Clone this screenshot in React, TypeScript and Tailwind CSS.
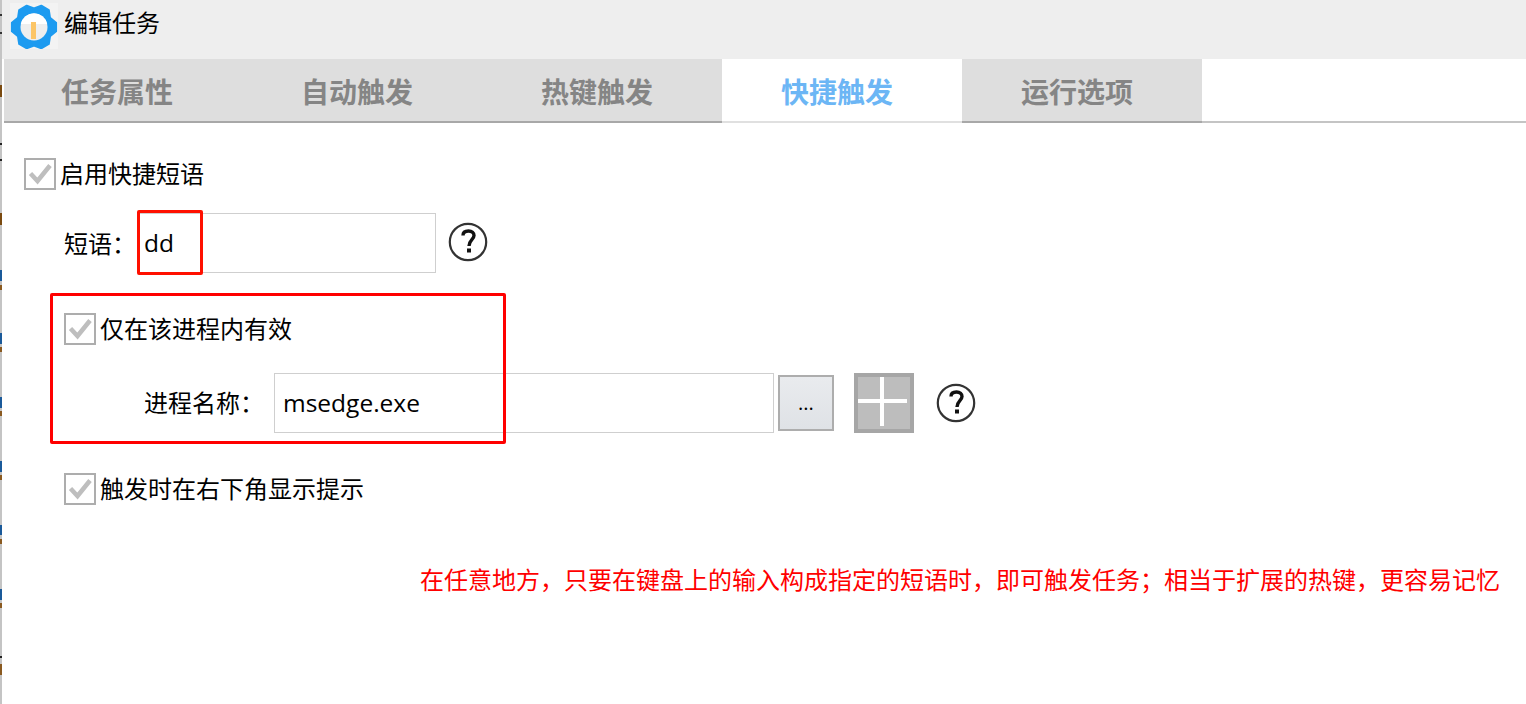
const cjk = "font-['Segoe_UI','Open_Sans','Noto_Sans_CJK_SC',sans-serif]";

const gearPath = (() => {
  const cx = 24;
  const cy = 24;
  const parts: string[] = [];
  for (let i = 0; i < 6; i++) {
    const t = (i * 60 * Math.PI) / 180;
    const pts: [number, number][] = [
      [t - (30 * Math.PI) / 180, 18.5],
      [t - (11 * Math.PI) / 180, 22.5],
      [t + (11 * Math.PI) / 180, 22.5],
    ];
    for (const [a, r] of pts) {
      parts.push(`${(cx + r * Math.cos(a)).toFixed(1)} ${(cy + r * Math.sin(a)).toFixed(1)}`);
    }
  }
  return "M" + parts.join(" L") + " Z";
})();

const edgeMarks: { top: number; h: number; color: string }[] = [
  { top: 14, h: 2, color: "#333333" },
  { top: 32, h: 2, color: "#333333" },
  { top: 85, h: 12, color: "#7a4a10" },
  { top: 143, h: 2, color: "#222222" },
  { top: 159, h: 2, color: "#222222" },
  { top: 213, h: 12, color: "#7a4a10" },
  { top: 270, h: 11, color: "#1a5a9a" },
  { top: 285, h: 5, color: "#8a5a20" },
  { top: 333, h: 11, color: "#1a5a9a" },
  { top: 347, h: 5, color: "#8a5a20" },
  { top: 397, h: 11, color: "#1a5a9a" },
  { top: 411, h: 5, color: "#8a5a20" },
  { top: 461, h: 11, color: "#1a5a9a" },
  { top: 475, h: 5, color: "#8a5a20" },
  { top: 525, h: 10, color: "#1a5a9a" },
  { top: 539, h: 5, color: "#8a5a20" },
  { top: 589, h: 11, color: "#1a5a9a" },
  { top: 603, h: 5, color: "#8a5a20" },
  { top: 656, h: 2, color: "#222222" },
  { top: 664, h: 11, color: "#8a5a20" },
];

function Check({ label }: { label: string }) {
  return (
    <div className="flex items-center h-8">
      <div className="w-8 h-8 border-2 border-[#adadad] bg-white flex items-center justify-center">
        <svg width="24" height="22" viewBox="0 0 24 22" fill="none" className="overflow-visible">
          <path d="M2.5 10.5 L9.5 18 L22 2.5" stroke="#bebebe" strokeWidth="4.5" />
        </svg>
      </div>
      <span className="ml-[4px] pb-[1px] text-[24px] leading-8 text-black">{label}</span>
    </div>
  );
}

function Help() {
  return (
    <svg width="40" height="40" viewBox="0 0 40 40" fill="none">
      <circle cx="20" cy="20" r="18.2" stroke="#333" strokeWidth="2.2" />
      <path d="M15 13.5 C15 10 17.5 9 20.5 9 C24 9 26 11 26 13.5 C26 17.5 21 18 21 24" stroke="#111" strokeWidth="3.4" />
      <rect x="19" y="26.5" width="4" height="4" fill="#111" />
    </svg>
  );
}

function Tab({ label, active, first }: { label: string; active?: boolean; first?: boolean }) {
  return (
    <div
      className={`h-[64px] border-b-2 flex items-center justify-center pt-[3px] text-[28px] font-bold ${first ? "w-[238px] pr-3" : "w-60 pr-[10px]"} ${
        active ? "bg-white text-[#6cb6f5] border-[#e0e0e0]" : "bg-[#dedede] text-[#858585] border-[#a8a8a8]"
      }`}
    >
      {label}
    </div>
  );
}

export default function App() {
  return (
    <div className={`relative w-[1526px] h-[704px] overflow-hidden bg-white flex ${cjk}`}>
      <div className="w-[2px] bg-[#c4c4c4] shrink-0" />
      <div className="flex-1 flex flex-col">
        <div className="h-[59px] bg-[#eeeeee] flex items-start">
          <svg className="ml-2 mt-[3px] bg-[#f3f3f3]" width="48" height="46" viewBox="0 0 48 46">
            <path d={gearPath} fill="#1d9bf0" stroke="#1d9bf0" strokeLinejoin="round" strokeWidth="2" />
            <circle cx="24" cy="24" r="13.5" fill="#eeeeee" />
            <path d="M10.8 21 A13.5 13.5 0 0 1 37.2 21 Z" fill="#ffffff" />
            <rect x="21" y="19" width="5" height="17" fill="#fcc566" />
          </svg>
          <span className="ml-[6px] mt-[5px] text-[24px] leading-9 text-black">编辑任务</span>
        </div>
        <div className="flex ml-[2px] bg-white h-[64px]">
          <Tab label="任务属性" first />
          <Tab label="自动触发" />
          <Tab label="热键触发" />
          <Tab label="快捷触发" active />
          <Tab label="运行选项" />
          <div className="flex-1 border-b-2 border-[#c4c4c4]" />
        </div>
        <div className="flex flex-col pt-[35px] pl-[22px]">
          <Check label="启用快捷短语" />
          <div className="flex items-center mt-[23px] ml-10 h-[60px]">
            <span className="w-[73px] pt-[1px] text-[24px] text-black whitespace-nowrap">短语：</span>
            <div className="w-[299px] h-[60px] border border-[#cfcfcf] bg-white pl-[6px] text-[24.5px] leading-[58px] text-black">dd</div>
            <div className="ml-[12px] mt-[-2px]"><Help /></div>
          </div>
          <div className="mt-10 ml-10"><Check label="仅在该进程内有效" /></div>
          <div className="flex items-center mt-7 ml-[120px] h-[60px]">
            <span className="w-[130px] text-[24px] text-black whitespace-nowrap">进程名称：</span>
            <div className="w-[500px] h-[60px] border border-[#cfcfcf] bg-white pl-[8px] text-[24.5px] leading-[58px] text-black">msedge.exe</div>
            <div className="ml-1 w-14 h-14 border-2 border-[#adadad] bg-gradient-to-b from-[#e9ebee] to-[#dfe2e6] flex items-center justify-center text-[20px] text-black">...</div>
            <div className="ml-5 w-[60px] h-[60px] border-4 border-[#a6a6a6] bg-[#bdbdbd] relative">
              <div className="absolute left-[22px] top-0 w-1 h-[49px] bg-white" />
              <div className="absolute left-0 top-[22px] w-[49px] h-1 bg-white" />
            </div>
            <div className="ml-[22px]"><Help /></div>
          </div>
          <div className="mt-10 ml-10"><Check label="触发时在右下角显示提示" /></div>
          <div className="mt-[57px] pr-[26px] text-right text-[24px] leading-9 text-[#ff0000] whitespace-nowrap">
            在任意地方，只要在键盘上的输入构成指定的短语时，即可触发任务；相当于扩展的热键，更容易记忆
          </div>
        </div>
      </div>
      {edgeMarks.map((m) => (
        <div
          key={m.top}
          className="absolute left-0 w-[2px]"
          style={{ top: m.top, height: m.h, backgroundColor: m.color }}
        />
      ))}
      <div className="absolute left-[137px] top-[210px] w-[66px] h-[65px] border-[3px] border-[#ff1000] rounded-[2px]" />
      <div className="absolute left-[50px] top-[293px] w-[456px] h-[151px] border-[3px] border-[#ff0000] rounded-[2px]" />
    </div>
  );
}
